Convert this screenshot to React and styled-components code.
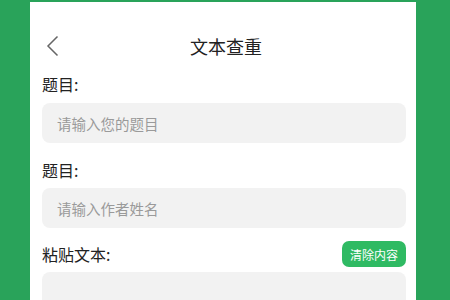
import React from 'react';
import styled, { createGlobalStyle } from 'styled-components';

const GlobalStyle = createGlobalStyle`
  html, body {
    margin: 0;
    padding: 0;
    background: #29a35a;
    font-family: "Noto Sans CJK SC", "Noto Sans", sans-serif;
  }
`;

const Page = styled.div`
  height: 300px;
  padding-top: 2px;
  box-sizing: border-box;
  overflow: hidden;
`;

const Card = styled.div`
  margin-left: 30px;
  width: 386px;
  height: 298px;
  background: #fff;
  padding: 22px 10px 0 12px;
  box-sizing: border-box;
`;

const Header = styled.div`
  position: relative;
  height: 44px;
  display: flex;
  align-items: center;
  justify-content: center;
`;

const Back = styled.button`
  position: absolute;
  left: 4px;
  top: 11px;
  border: 0;
  background: none;
  padding: 0;
  width: 14px;
  height: 22px;
  cursor: pointer;
`;

const Title = styled.div`
  font-size: 18px;
  color: #222;
  margin-left: 4px;
`;

const Label = styled.div`
  font-size: 16px;
  line-height: 24px;
  color: #222;
  margin-top: ${(p) => p.$gap}px;
`;

const LabelRow = styled.div`
  display: flex;
  align-items: center;
  justify-content: space-between;
  height: 26px;
  margin-top: 13px;
`;

const Input = styled.input`
  display: block;
  width: 100%;
  height: 40px;
  box-sizing: border-box;
  border: 0;
  border-radius: 8px;
  background: #f2f2f2;
  margin-top: ${(p) => p.$gap}px;
  padding: 0 15px;
  font-family: inherit;
  font-size: 14.5px;
  color: #333;
  outline: none;
  &::placeholder {
    color: #9a9a9a;
  }
`;

const Textarea = styled.textarea`
  display: block;
  width: 100%;
  height: 120px;
  box-sizing: border-box;
  border: 0;
  border-radius: 8px;
  background: #f2f2f2;
  margin-top: 5px;
  padding: 12px 15px;
  font-family: inherit;
  resize: none;
  outline: none;
`;

const ClearButton = styled.button`
  height: 26px;
  padding: 0 8px;
  border: 0;
  border-radius: 7px;
  background: #2fba63;
  color: #fff;
  font-family: inherit;
  font-size: 12px;
  cursor: pointer;
`;

export default function App() {
  return (
    <Page>
      <GlobalStyle />
      <Card>
        <Header>
          <Back>
            <svg width="14" height="22" viewBox="0 0 14 22">
              <path d="M11.5 1.5 L2 11 L11.5 20.5" fill="none" stroke="#666" strokeWidth="1.5" />
            </svg>
          </Back>
          <Title>文本查重</Title>
        </Header>
        <Label $gap={4}>题目:</Label>
        <Input $gap={7} placeholder="请输入您的题目" />
        <Label $gap={15}>题目:</Label>
        <Input $gap={6} placeholder="请输入作者姓名" />
        <LabelRow>
          <Label $gap={0}>粘贴文本:</Label>
          <ClearButton>清除内容</ClearButton>
        </LabelRow>
        <Textarea />
      </Card>
    </Page>
  );
}
